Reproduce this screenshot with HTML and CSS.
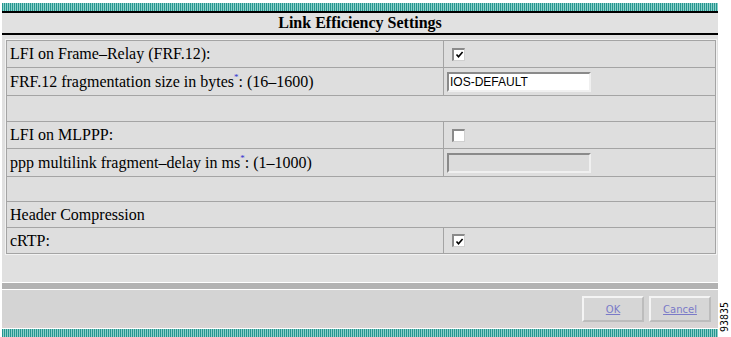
FILE: index.html
```html
<!DOCTYPE html>
<html>
<head>
<meta charset="utf-8">
<link rel="stylesheet" href="styles.css">
</head>
<body>
<div class="frame">
  <div class="stripe stripe-top"></div>
  <div class="title">Link Efficiency Settings</div>
  <div class="panel">
    <table class="settings">
      <tr class="r27">
        <td class="label">LFI on Frame–Relay (FRF.12):</td>
        <td class="ctrl"><span class="cb"><svg viewBox="0 0 9 9" width="9" height="9"><path d="M1.5 4.5 L3.5 6.8 L7.6 2" fill="none" stroke="#000" stroke-width="1.6"/></svg></span></td>
      </tr>
      <tr class="r28">
        <td class="label">FRF.12 fragmentation size in bytes<sup class="ast">*</sup>: (16–1600)</td>
        <td class="ctrl"><span class="field">IOS-DEFAULT</span></td>
      </tr>
      <tr class="r26"><td class="label" colspan="2"></td></tr>
      <tr class="r27">
        <td class="label">LFI on MLPPP:</td>
        <td class="ctrl"><span class="cb"></span></td>
      </tr>
      <tr class="r28">
        <td class="label">ppp multilink fragment–delay in ms<sup class="ast">*</sup>: (1–1000)</td>
        <td class="ctrl"><span class="field disabled"></span></td>
      </tr>
      <tr class="r25"><td class="label" colspan="2"></td></tr>
      <tr class="r26"><td class="label" colspan="2">Header Compression</td></tr>
      <tr class="r26">
        <td class="label">cRTP:</td>
        <td class="ctrl"><span class="cb"><svg viewBox="0 0 9 9" width="9" height="9"><path d="M1.5 4.5 L3.5 6.8 L7.6 2" fill="none" stroke="#000" stroke-width="1.6"/></svg></span></td>
      </tr>
    </table>
  </div>
  <div class="divider"></div>
  <div class="footer">
    <a class="btn" href="#">OK</a>
    <a class="btn" href="#">Cancel</a>
  </div>
  <div class="stripe stripe-bottom"></div>
</div>
<div class="figno">93835</div>
</body>
</html>
```

FILE: styles.css
```css
html, body {
  margin: 0;
  padding: 0;
  background: #ffffff;
}
body {
  position: relative;
  width: 731px;
  height: 337px;
  overflow: hidden;
  font-family: "Liberation Serif", "Times New Roman", serif;
  color: #000;
}
.frame {
  margin-left: 2px;
  padding-top: 3px;
  width: 716px;
}
.stripe {
  height: 8px;
  background: repeating-linear-gradient(90deg, #24968f 0 1px, #8ccfca 1px 2px);
}
.title {
  border-top: 2px solid #000;
  border-bottom: 2px solid #000;
  background: #e1e1e1;
  height: 20px;
  line-height: 20px;
  text-align: center;
  font-weight: bold;
  font-size: 16px;
}
.panel {
  background: #e0e0e0;
  padding: 5px 2px 28px 4px;
}
.settings {
  width: 100%;
  border-collapse: collapse;
  border: 1px solid #a4a4a4;
  box-shadow: 0 0 0 1px #f2f2f2;
  background: #dedede;
}
.settings td {
  border: 1px solid #a4a4a4;
  height: 25px;
  padding: 0 3px;
  font-size: 16px;
  vertical-align: middle;
}
.settings tr.r25 td { height: 24px; }
.settings tr.r26 td { height: 25px; }
.settings tr.r27 td { height: 26px; }
.settings tr.r28 td { height: 27px; }
.settings td.label {
  width: 430px;
}
.settings td.ctrl {
  padding-left: 3px;
}
.ast {
  color: #3030d0;
  font-size: 9px;
  vertical-align: 7px;
  line-height: 0;
}
.cb {
  display: flex;
  align-items: center;
  justify-content: center;
  width: 10px;
  height: 10px;
  margin-left: 5px;
  background: #ffffff;
  border-top: 2px solid #8a8a8a;
  border-left: 2px solid #8a8a8a;
  border-right: 1px solid #d0d0d0;
  border-bottom: 1px solid #d0d0d0;
}
.field {
  display: block;
  box-sizing: border-box;
  width: 144px;
  height: 20px;
  background: #ffffff;
  border-top: 2px solid #8a8a8a;
  border-left: 2px solid #8a8a8a;
  border-right: 2px solid #f0f0f0;
  border-bottom: 2px solid #f0f0f0;
  font-family: "Liberation Sans", Arial, sans-serif;
  font-size: 12px;
  line-height: 16px;
  padding-left: 1px;
}
.field.disabled {
  background: #dcdcdc;
}
.divider {
  border-top: 1px solid #ffffff;
  border-bottom: 1px solid #ffffff;
  background: #b2b2b2;
  height: 6px;
}
.footer {
  height: 38px;
  background: linear-gradient(180deg, #d4d4d4 0, #d4d4d4 80%, #dcd4d4 100%);
  border-bottom: 1px solid #ffffff;
  display: flex;
  justify-content: flex-end;
  align-items: center;
  gap: 5px;
  padding-right: 7px;
}
.btn {
  box-sizing: border-box;
  width: 62px;
  height: 26px;
  display: flex;
  align-items: center;
  justify-content: center;
  border: 2px solid #f4f4f4;
  border-right-color: #bcbcbc;
  border-bottom-color: #bcbcbc;
  background: #d6d6d6;
  font-family: "DejaVu Sans", "Liberation Sans", sans-serif;
  font-size: 10px;
  color: #7a7ac8;
  text-decoration: underline;
}
.figno {
  position: absolute;
  left: 719px;
  top: 298px;
  width: 11px;
  height: 37px;
  writing-mode: vertical-rl;
  transform: rotate(180deg);
  font-family: "DejaVu Sans Mono", "Liberation Mono", monospace;
  font-size: 10px;
  line-height: 11px;
  color: #000;
  text-align: center;
}
```
